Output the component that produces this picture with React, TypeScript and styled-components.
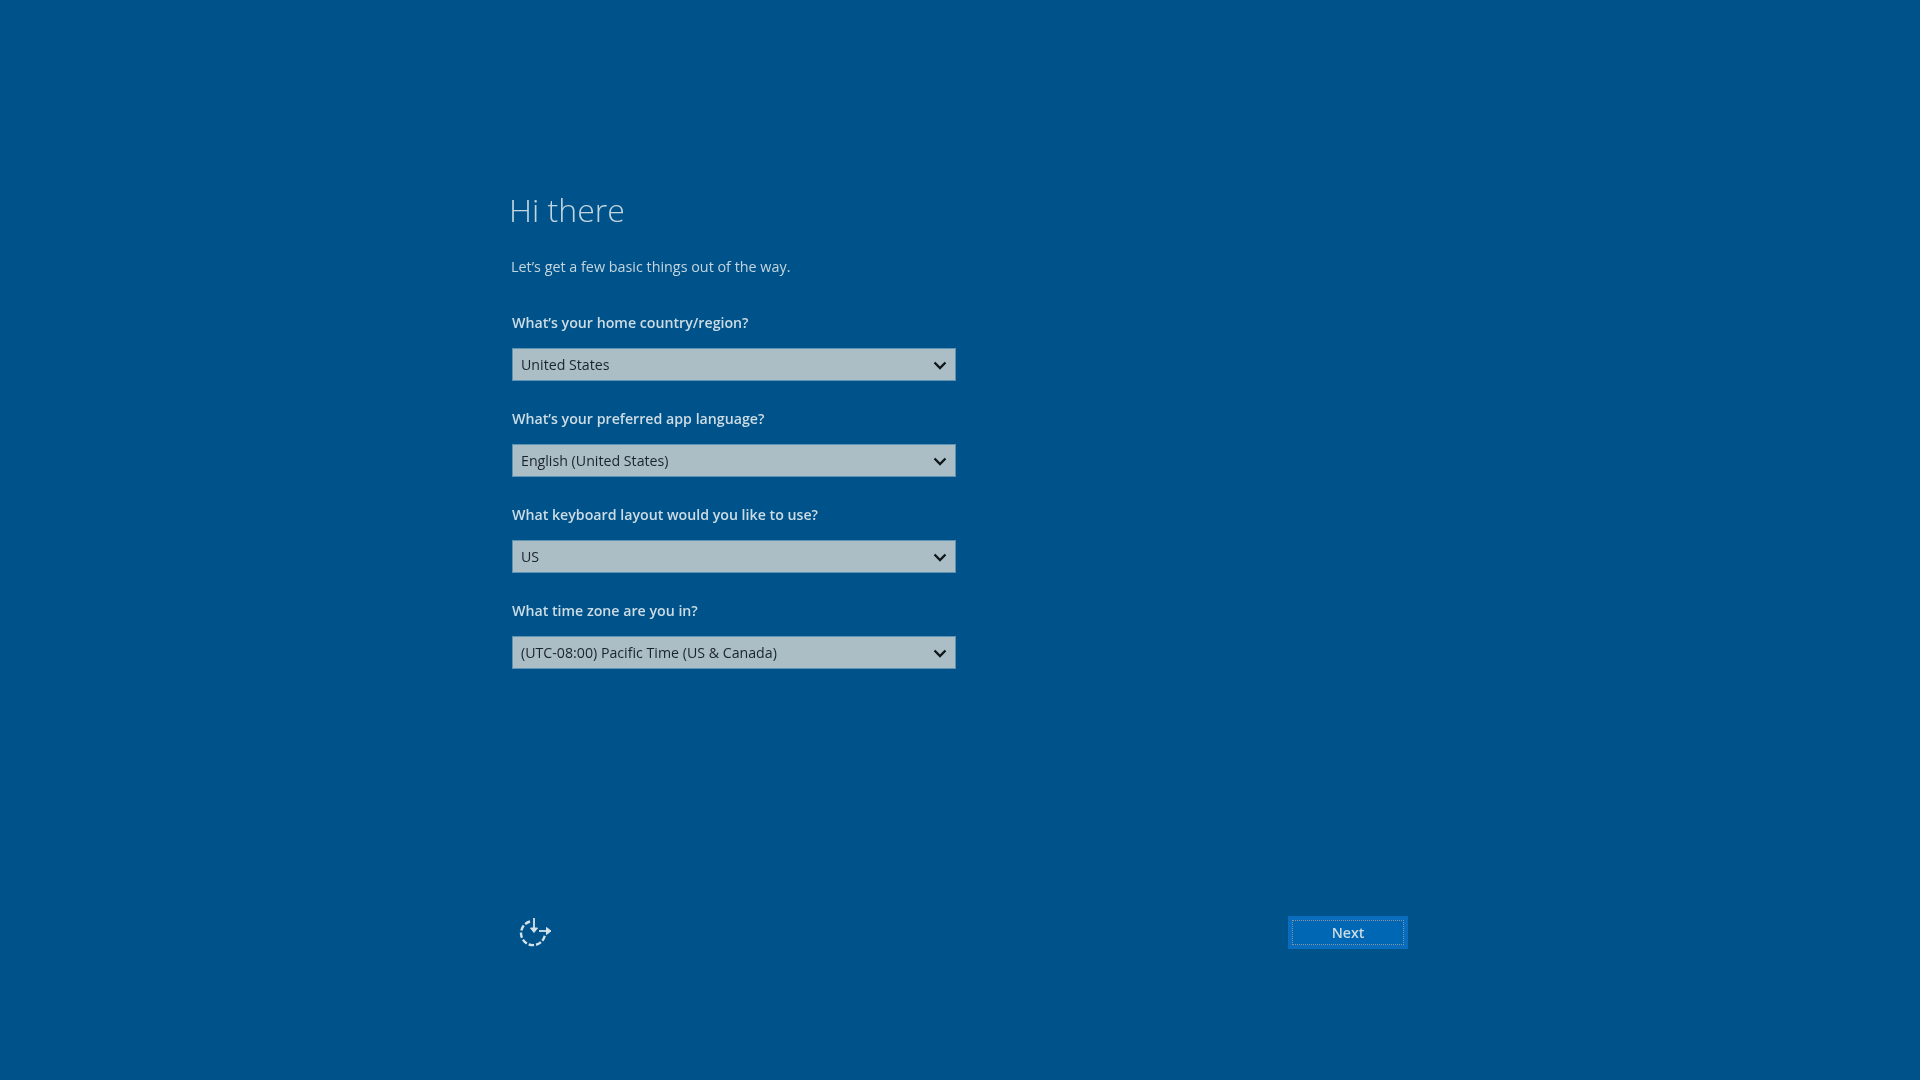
import React from 'react';
import styled, { createGlobalStyle } from 'styled-components';

const GlobalStyle = createGlobalStyle`
  html, body {
    margin: 0;
    padding: 0;
    background: #00528a;
    font-family: "Open Sans", "Noto Sans", sans-serif;
  }
  * {
    box-sizing: border-box;
  }
`;

const Page = styled.div`
  width: 1920px;
  height: 1080px;
  overflow: hidden;
  background: #00528a;
  display: flex;
  flex-direction: column;
  padding: 186px 512px 0 512px;
  filter: blur(0.5px);
`;

const Title = styled.h1`
  margin: 0 0 0 -3px;
  height: 48px;
  color: #c3d6df;
  font-size: 32px;
  font-weight: 300;
  line-height: 48px;
`;

const Intro = styled.p`
  margin: 21px 0 0 -1px;
  height: 24px;
  color: #c3d6df;
  font-size: 14.35px;
  line-height: 24px;
`;

const Form = styled.div`
  display: flex;
  flex-direction: column;
  gap: 26px;
  margin-top: 32px;
`;

const Field = styled.div`
  display: flex;
  flex-direction: column;
  gap: 13px;
`;

const Label = styled.label`
  height: 24px;
  color: #ccdce4;
  font-size: 14.2px;
  font-weight: 600;
  line-height: 24px;
`;

const Select = styled.div`
  width: 444px;
  height: 33px;
  display: flex;
  align-items: center;
  justify-content: space-between;
  padding: 0 8px;
  background: #abbec5;
  border: 1px solid #5f93b4;
  color: #1a242c;
  font-size: 14.2px;
`;

const Footer = styled.div`
  display: flex;
  align-items: center;
  justify-content: space-between;
  margin-top: 247px;
`;

const AccessButton = styled.div`
  width: 46px;
  height: 33px;
  display: flex;
  align-items: center;
  justify-content: center;
`;

const NextButton = styled.button`
  width: 120px;
  height: 33px;
  padding: 0;
  background: #0067b4;
  border: 4px solid #0a6cbd;
  outline: 1px dotted #8896a3;
  outline-offset: -5px;
  color: #c9dae2;
  font-family: inherit;
  font-size: 14.2px;
  font-weight: 600;
`;

const Chevron = () => (
  <svg width="14" height="10" viewBox="0 0 14 10" fill="none">
    <path d="M1.5 2.5 L7 8 L12.5 2.5" stroke="#11171c" strokeWidth="2.4" />
  </svg>
);

const EaseIcon = () => (
  <svg width="46" height="33" viewBox="0 0 46 33" fill="none" stroke="#d5e2e8">
    <path d="M18 5.5 A12 12 0 1 0 33 18" strokeWidth="2.4" strokeDasharray="5.5 2" />
    <path d="M22 2 V15" strokeWidth="1.8" />
    <path d="M18.5 12 L22 16.5 L25.5 12 Z" fill="#d5e2e8" strokeWidth="1" />
    <path d="M27 15 H37" strokeWidth="1.8" />
    <path d="M34.5 11.5 L39 15 L34.5 18.5 Z" fill="#d5e2e8" strokeWidth="1" />
  </svg>
);

const fields = [
  { label: 'What’s your home country/region?', value: 'United States' },
  { label: 'What’s your preferred app language?', value: 'English (United States)' },
  { label: 'What keyboard layout would you like to use?', value: 'US' },
  { label: 'What time zone are you in?', value: '(UTC-08:00) Pacific Time (US & Canada)' },
];

const App: React.FC = () => {
  return (
    <>
      <GlobalStyle />
      <Page>
        <Title>Hi there</Title>
        <Intro>Let’s get a few basic things out of the way.</Intro>
        <Form>
          {fields.map((field) => (
            <Field key={field.label}>
              <Label>{field.label}</Label>
              <Select>
                <span>{field.value}</span>
                <Chevron />
              </Select>
            </Field>
          ))}
        </Form>
        <Footer>
          <AccessButton>
            <EaseIcon />
          </AccessButton>
          <NextButton>Next</NextButton>
        </Footer>
      </Page>
    </>
  );
};

export default App;
